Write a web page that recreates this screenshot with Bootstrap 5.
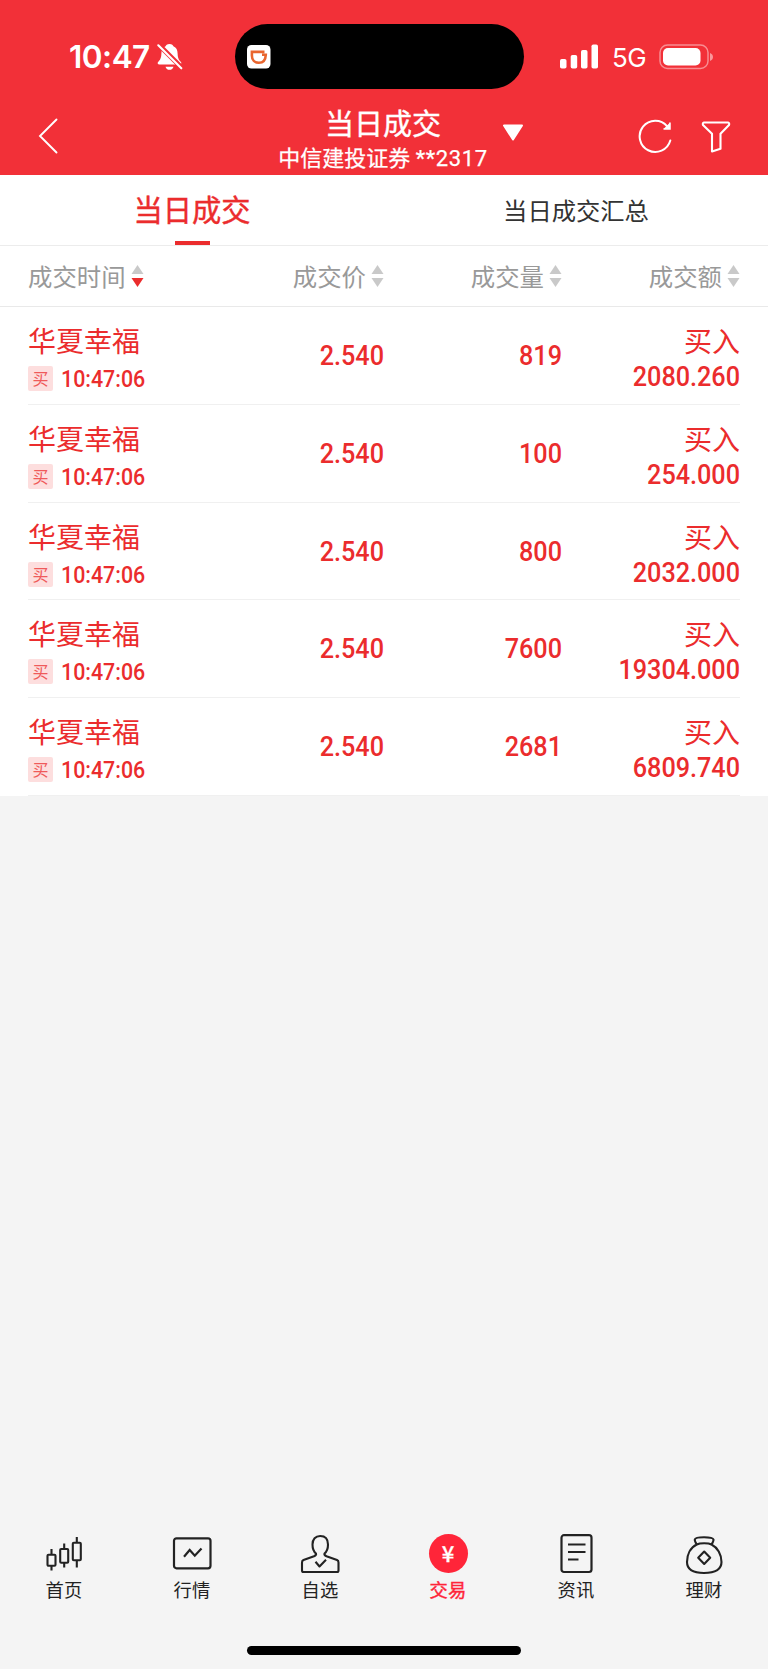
<!DOCTYPE html>
<html lang="zh-CN">
<head>
<meta charset="utf-8">
<meta name="viewport" content="width=device-width, initial-scale=1">
<title>当日成交</title>
<link rel="stylesheet" href="https://cdn.jsdelivr.net/npm/bootstrap@5.3.0/dist/css/bootstrap.min.css">
<style>
:root{--brand:#f23038;--buy:#eb2c2d;--cjk:"Noto Sans CJK SC",sans-serif}
body{font-family:var(--cjk);background:#f4f4f4;height:1669px;line-height:1}
svg{display:block;flex:none}
.app-head{background:var(--brand);height:175px}
.status{height:89px;padding-top:24px}
.side-l{width:234.500px;padding-left:69px}
.clock{font:600 31.5px/1 Inter,sans-serif;letter-spacing:-.5px;padding-top:1px}
.island{width:289.500px;height:65px;border-radius:33px;background:#000;padding-left:12.500px}
.side-r{width:244px;padding-left:36px}
.net{font:400 26px/1 Inter,sans-serif;letter-spacing:-.6px;margin-left:13px;margin-right:13px;padding-top:3px}
.titlebar{height:86px}
.side-b{width:200px}
.title-main{font-size:29px;line-height:34px;-webkit-text-stroke:.4px #fff}
.title-sub{font:400 22px/30px Roboto,var(--cjk);-webkit-text-stroke:.25px #fff;margin-top:5px}
.acct{letter-spacing:.6px}
.tabs{height:71px;border-bottom:1px solid #ececec}
.tab-on{color:var(--buy);font-size:29.3px;-webkit-text-stroke:.4px var(--buy);padding-bottom:2px}
.tab-on::after{content:"";position:absolute;bottom:0;left:50%;width:35px;height:4px;margin-left:-17px;background:var(--buy)}
.tab-off{color:#333;font-size:24.3px}
.cols{height:61px;padding:0 28px;border-bottom:1px solid #e9e9e9;color:#999;font-size:24.4px}
.deals{padding:0 28px}
.deal{height:97.75px;border-bottom:1px solid #f0f0f0;color:var(--buy)}
.name{font-size:28px;line-height:32px;padding-top:17px}
.tag{width:25px;height:25px;margin-top:2px;border-radius:2px;background:#fddede;font-size:16px;line-height:24px;text-align:center;color:#ef5a5a}
.time{font:500 24.3px/24px Roboto,sans-serif;padding-top:3px;transform:scaleX(.88);transform-origin:left}
.num{font:500 28px/30px Roboto,sans-serif;transform:scaleX(.9);transform-origin:right}
.num-mid{padding-top:34px}
.amount{margin-top:6px}
.dock{height:112px}
.dock-item{color:#222;font-size:18.3px;letter-spacing:.3px}
.dock-item.on{color:#ff2539;-webkit-text-stroke:.4px #ff2539}
.dock-item div:last-child{margin-top:4px}
.dock-item.on div:last-child{margin-top:7px}
.yen{width:39px;height:39px;background:#ff2539;color:#fff;font:500 22px/36px "Noto Sans CJK SC",sans-serif;-webkit-text-stroke:.3px #fff;letter-spacing:0}
.homebar{width:274px;height:9px;background:#000}
</style>
</head>
<body class="d-flex flex-column">
<header class="app-head text-white">
  <div class="status d-flex">
    <div class="side-l d-flex align-items-center">
      <span class="clock">10:47</span>
      <svg style="margin-left:7px" width="26" height="28" viewBox="0 0 26 28"><path fill="#fff" d="M12.500 1C10 1 9 2.300 8.600 3.200C5.500 4.400 4.500 7 4.400 10.500C4.200 15.500 3 17 1.500 18.500C0 20 .5 21.500 2.500 21.500H22.500C24.500 21.500 25 20 23.500 18.500C22 17 20.800 15.500 20.600 10.500C20.500 7 19.500 4.400 16.400 3.200C16 2.300 15 1 12.500 1zM8.500 23.700H16.500C16 25.700 14.500 26.800 12.500 26.800S9 25.700 8.500 23.700z"/><path d="M1 1L25.500 25.500" stroke="#f23038" stroke-width="4.800"/><path d="M1.300 2.300L24.300 25.300" stroke="#fff" stroke-width="2.100" stroke-linecap="round"/></svg>
    </div>
    <div class="island d-flex align-items-center">
      <svg width="24" height="24" viewBox="0 0 24 24"><rect width="23.500" height="23.500" rx="4.500" fill="#fff"/><path d="M17.500 6.900H4.900V10.500C4.900 15.300 7.800 17.800 11.800 17.800C16 17.800 18.600 14.800 18.800 9.700H15" fill="none" stroke="#e9652e" stroke-width="2.600"/></svg>
    </div>
    <div class="side-r d-flex align-items-center">
      <svg width="39" height="25" viewBox="0 0 39 25" fill="#fff"><rect x="0" y="15" width="6.500" height="9.500" rx="1.800"/><rect x="10.700" y="11" width="6.500" height="13.500" rx="1.800"/><rect x="21" y="6" width="6.500" height="18.500" rx="1.800"/><rect x="31.500" y=".5" width="6.500" height="24" rx="1.800"/></svg>
      <span class="net">5G</span>
      <svg width="55" height="26" viewBox="0 0 55 26"><rect x="1" y="1" width="48" height="23.500" rx="7.500" fill="none" stroke="#fff" stroke-opacity=".45" stroke-width="1.500"/><rect x="4" y="4" width="37.500" height="17.500" rx="5" fill="#fff"/><path d="M51 9v8c1.800-.7 3-2 3-4s-1.200-3.300-3-4z" fill="#fff" fill-opacity=".5"/></svg>
    </div>
  </div>
  <div class="titlebar d-flex justify-content-between">
    <div class="side-b ps-4 pt-4 ms-1" style="margin-right:-6px">
      <svg class="ms-2 mt-1" width="24" height="38" viewBox="0 0 24 38"><path d="M20.500 2.500L4 19L20.500 35.500" fill="none" stroke="#fff" stroke-width="1.900" stroke-linecap="round"/></svg>
    </div>
    <div class="position-relative text-center text-nowrap pt-3">
      <div class="title-main">当日成交</div>
      <div class="title-sub">中信建投证券 <span class="acct">**2317</span></div>
      <svg class="position-absolute" style="right:-36px;top:35px" width="22" height="18" viewBox="0 0 22 18"><path d="M2 1.500H20L11 15.500z" fill="#fff" stroke="#fff" stroke-width="2" stroke-linejoin="round"/></svg>
    </div>
    <div class="side-b d-flex justify-content-end">
      <svg style="margin:30px 28px 0 0" width="35" height="36" viewBox="0 0 35 36"><path d="M29.200 7.300A15.600 15.600 0 1 0 32.300 21.500" fill="none" stroke="#fff" stroke-width="2" stroke-linecap="round"/><path d="M32 3.500V10H25.500" fill="#fff" stroke="#fff" stroke-width="1.500"/></svg>
      <svg style="margin:31px 37px 0 0" width="30" height="34" viewBox="0 0 30 34"><path d="M2.800 2.500H27.200C28 2.500 28.500 4 28 5L19.500 13.800V28.800L11 31.500V13.800L2 5C1.500 4 2 2.500 2.800 2.500z" fill="none" stroke="#fff" stroke-width="2.100" stroke-linejoin="round"/></svg>
    </div>
  </div>
</header>
<main class="bg-white">
  <nav class="tabs d-flex">
    <a class="tab-on position-relative w-50 d-flex align-items-center justify-content-center text-decoration-none">当日成交</a>
    <a class="tab-off w-50 d-flex align-items-center justify-content-center text-decoration-none">当日成交汇总</a>
  </nav>
  <div class="cols">
    <div class="row g-0 h-100 align-items-center text-nowrap" id="cols"></div>
  </div>
  <div class="deals" id="deals"></div>
</main>
<footer class="mt-auto">
  <nav class="dock row g-0 text-center">
    <div class="col dock-item"><svg class="mx-auto" width="40" height="42" viewBox="0 0 40 42" fill="none" stroke="#222" stroke-width="2.100"><path d="M7.500 15v6M7.500 31.500v5M20.200 9.500v5.500M20.200 28.500v5M32.800 3v6M32.800 26.500v7"/><rect x="3.500" y="20.800" width="8" height="11" rx="1"/><rect x="16.200" y="15" width="8" height="13.800" rx="1"/><rect x="28.800" y="8.800" width="8" height="17.500" rx="1"/></svg><div>首页</div></div>
    <div class="col dock-item"><svg class="mx-auto" width="40" height="42" viewBox="0 0 40 42" fill="none" stroke="#222" stroke-width="2.200"><rect x="2" y="4.300" width="36.500" height="30" rx="2.500"/><path d="M12 22.700L17.700 16L22.800 21.700L29.500 14.500"/></svg><div>行情</div></div>
    <div class="col dock-item"><svg class="mx-auto" width="40" height="42" viewBox="0 0 40 42" fill="none" stroke="#222" stroke-width="2.100" stroke-linejoin="round"><path d="M16 19.500C13.500 17.500 12.500 14.500 12.500 10.500C12.500 5 15.500 2 20.200 2S28 5 28 10.500C28 14.500 27 17.500 24.500 19.500C24 21 25 21.500 26.500 22.200L37 26Q38.500 26.700 38.500 28.500V36.500Q38.500 38 37 38H3.500Q2 38 2 36.500V28.500Q2 26.700 3.500 26L14 22.200C15.500 21.500 16.500 21 16 19.500z"/><path d="M15.500 27.800L19.500 32.500L26 25.800"/></svg><div>自选</div></div>
    <div class="col dock-item on"><div class="yen rounded-circle mx-auto">¥</div><div>交易</div></div>
    <div class="col dock-item"><svg class="mx-auto" width="40" height="42" viewBox="0 0 40 42" fill="none" stroke="#222" stroke-width="2.200"><rect x="5.500" y="1.200" width="30" height="36.800" rx="2.500"/><path d="M12 10.500h17.500M12 18h17.500M12 25.500h10.500"/></svg><div>资讯</div></div>
    <div class="col dock-item"><svg class="mx-auto" width="40" height="42" viewBox="0 0 40 42" fill="none" stroke="#222" stroke-width="2.100" stroke-linejoin="round"><path d="M12.800 10.500C11.500 8.500 10.500 7 10.800 5.500C11.500 2.500 28.500 2.500 29.500 5.500C29.800 7 28.800 8.500 27.500 10.500C24.500 8.800 15.800 8.800 12.800 10.500C6.500 13.500 3 20.500 3 28C3 35 8 39 20 39S37.500 35 37.500 28C37.500 20.500 33.500 13.500 27.500 10.500"/><path d="M20.200 17.500L26.200 23.700L20.200 29.900L14.200 23.700z"/></svg><div>理财</div></div>
  </nav>
  <div class="homebar rounded-pill mx-auto" style="margin-bottom:14px"></div>
</footer>
<script>
const heads=[["成交时间",1],["成交价",0],["成交量",0],["成交额",0]];
document.getElementById("cols").innerHTML=heads.map(([t,on],i)=>`<div class="col d-flex align-items-center ${i?"justify-content-end":""}"><span>${t}</span><svg style="margin-left:5px" width="13" height="24" viewBox="0 0 13 24"><path d="M6.500 1L12.500 10H.5z" fill="#c9c9c9"/><path d="M6.500 23L.5 14H12.500z" fill="${on?"#eb2c2d":"#c9c9c9"}"/></svg></div>`).join("");
const deals=[["819","2080.260"],["100","254.000"],["800","2032.000"],["7600","19304.000"],["2681","6809.740"]];
document.getElementById("deals").innerHTML=deals.map(([q,a])=>`<div class="deal row g-0">
<div class="col"><div class="name">华夏幸福</div><div class="d-flex mt-2"><span class="tag">买</span><span class="time ms-2">10:47:06</span></div></div>
<div class="col num num-mid text-end">2.540</div>
<div class="col num num-mid text-end">${q}</div>
<div class="col text-end"><div class="name">买入</div><div class="num amount">${a}</div></div></div>`).join("");
</script>
<script src="https://cdn.jsdelivr.net/npm/bootstrap@5.3.0/dist/js/bootstrap.bundle.min.js"></script>
</body>
</html>
